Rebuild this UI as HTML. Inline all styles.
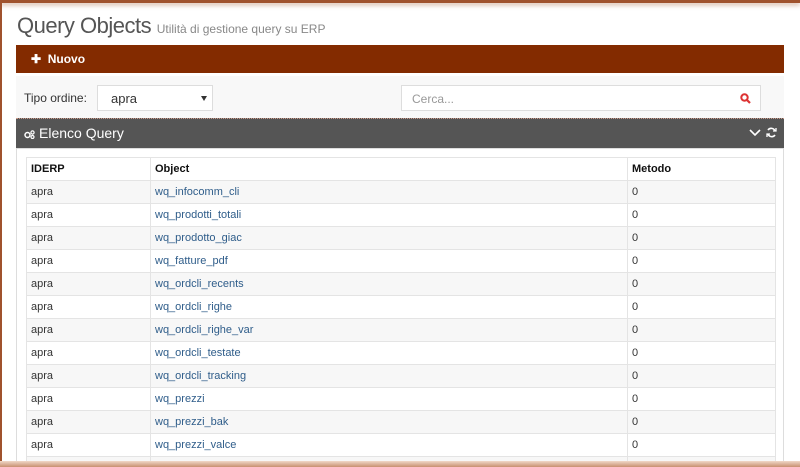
<!DOCTYPE html>
<html><head><meta charset="utf-8"><style>
*{box-sizing:border-box;margin:0;padding:0}
html,body{width:800px;height:467px;overflow:hidden}
body{background:#fff;font-family:"Liberation Sans",sans-serif;position:relative;color:#333}
.topl{position:absolute;left:0;top:0;width:800px;height:3px;background:#a0522d;box-shadow:0 2px 5px rgba(160,80,40,.5)}
.leftl{position:absolute;left:0;top:0;width:2px;height:467px;background:#a0522d}
.botl{position:absolute;left:0;top:461px;width:800px;height:6px;background:linear-gradient(#f0d8c8,#c89070)}
h1{position:absolute;left:17px;top:13px;font-weight:normal;font-size:22px;color:#555;letter-spacing:-.5px}
h1 small{font-size:12px;color:#888;letter-spacing:0}
.bar{position:absolute;left:16px;top:45px;width:768px;height:28px;background:#832b00;color:#fff;font-size:12px;font-weight:bold;padding:7px 0 0 15px}
.filt{position:absolute;left:16px;top:76px;width:768px;height:42px;background:#f8f8f8}
.lbl{position:absolute;left:24px;top:91px;font-size:12px;color:#333}
.sel{position:absolute;left:97px;top:85px;width:116px;height:26px;background:#fff;border:1px solid #ddd;font-size:13px;padding:5px 0 0 13px}
.sel:after{content:"";position:absolute;right:5px;top:10px;border:3.5px solid transparent;border-top:5px solid #333}
.srch{position:absolute;left:401px;top:85px;width:360px;height:26px;background:#fff;border:1px solid #ddd;font-size:12px;color:#999;padding:6px 0 0 10px}
.ph{position:absolute;left:16px;top:118px;width:768px;height:30px;background:#555;color:#fff;font-size:14px;padding:6px 0 0 23px;border-top:1px dotted #c98}
.pb{position:absolute;left:16px;top:148px;width:768px;height:319px;background:#fff;border:1px solid #ddd}
table{position:absolute;left:26px;top:157px;width:750px;border-collapse:collapse;font-size:11px}
td,th{border:1px solid #e4e4e4;height:23px;padding:0 4px;text-align:left}
th{font-weight:bold;color:#111}
tr:nth-child(even) td{background:#f7f7f7}
td.o{color:#2f5d8a}
</style></head><body>
<div class="topl"></div><div class="leftl"></div>
<h1>Query Objects <small>Utilità di gestione query su ERP</small></h1>
<div class="bar">✚&nbsp; Nuovo</div>
<div class="filt"></div>
<div class="lbl">Tipo ordine:</div>
<div class="sel">apra</div>
<div class="srch">Cerca...<svg style="position:absolute;right:9px;top:7px" width="11" height="11" viewBox="0 0 11 11"><circle cx="4.5" cy="4.5" r="3.2" fill="none" stroke="#d33" stroke-width="2"/><path d="M7 7L10 10" stroke="#d33" stroke-width="2.2"/></svg></div>
<div class="ph"><svg style="position:absolute;left:8px;top:11px" width="11" height="9" viewBox="0 0 11 9"><circle cx="3.5" cy="5" r="2.5" fill="none" stroke="#fff" stroke-width="1.5"/><circle cx="8.5" cy="2.5" r="1.6" fill="none" stroke="#fff" stroke-width="1.2"/><circle cx="8.5" cy="7" r="1.5" fill="none" stroke="#fff" stroke-width="1.2"/></svg>Elenco Query
<svg style="position:absolute;left:733px;top:10px" width="12" height="8" viewBox="0 0 12 8"><path d="M1 1L6 6L11 1" fill="none" stroke="#fff" stroke-width="1.6"/></svg>
<svg style="position:absolute;left:750px;top:8px" width="11" height="11" viewBox="0 0 11 11"><path d="M9 4A4 4 0 0 0 2 3M2 7A4 4 0 0 0 9 8" fill="none" stroke="#fff" stroke-width="1.6"/><path d="M10 1V4H7M1 10V7H4" fill="none" stroke="#fff" stroke-width="1.3"/></svg></div>
<div class="pb"></div>
<table>
<tr><th style="width:124px">IDERP</th><th style="width:477px">Object</th><th>Metodo</th></tr>
<tr><td>apra</td><td class="o">wq_infocomm_cli</td><td>0</td></tr>
<tr><td>apra</td><td class="o">wq_prodotti_totali</td><td>0</td></tr>
<tr><td>apra</td><td class="o">wq_prodotto_giac</td><td>0</td></tr>
<tr><td>apra</td><td class="o">wq_fatture_pdf</td><td>0</td></tr>
<tr><td>apra</td><td class="o">wq_ordcli_recents</td><td>0</td></tr>
<tr><td>apra</td><td class="o">wq_ordcli_righe</td><td>0</td></tr>
<tr><td>apra</td><td class="o">wq_ordcli_righe_var</td><td>0</td></tr>
<tr><td>apra</td><td class="o">wq_ordcli_testate</td><td>0</td></tr>
<tr><td>apra</td><td class="o">wq_ordcli_tracking</td><td>0</td></tr>
<tr><td>apra</td><td class="o">wq_prezzi</td><td>0</td></tr>
<tr><td>apra</td><td class="o">wq_prezzi_bak</td><td>0</td></tr>
<tr><td>apra</td><td class="o">wq_prezzi_valce</td><td>0</td></tr>
<tr><td>apra</td><td class="o">wq_prodotti</td><td>0</td></tr>
</table>
<div class="botl"></div>
</body></html>
